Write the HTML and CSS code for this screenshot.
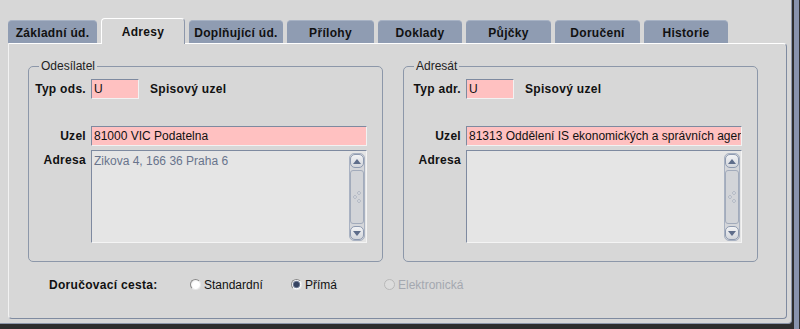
FILE: index.html
```html
<!DOCTYPE html>
<html lang="cs">
<head>
    <meta charset="UTF-8">
    <title>Adresy</title>
    <link rel="stylesheet" href="styles.css">
</head>
<body>
    <div class="screen">
        <div class="frame">
            <div class="tabs">
                <div class="tab">Základní úd.</div>
                <div class="tab active">Adresy</div>
                <div class="tab">Doplňující úd.</div>
                <div class="tab">Přílohy</div>
                <div class="tab">Doklady</div>
                <div class="tab">Půjčky</div>
                <div class="tab">Doručení</div>
                <div class="tab">Historie</div>
            </div>

            <div class="panel">
                <div class="groups">
                    <fieldset class="group">
                        <legend>Odesílatel</legend>
                        <div class="form">
                            <label class="lbl">Typ ods.</label>
                            <div class="typ">
                                <div class="field short">U</div>
                                <span class="kind">Spisový uzel</span>
                            </div>
                            <label class="lbl gap-row">Uzel</label>
                            <div class="field gap-row">81000 VIC Podatelna</div>
                            <label class="lbl top">Adresa</label>
                            <div class="area">
                                <div class="area-text">Zikova 4, 166 36 Praha 6</div>
                                <div class="scroll">
                                    <div class="sb-btn"><span class="arrow up"></span></div>
                                    <div class="sb-track">
                                        <svg width="8" height="12" viewBox="0 0 8 12"><circle cx="2" cy="6" r="1.3" fill="#fff" stroke="#8c96a8" stroke-width="0.7"/><circle cx="6" cy="2" r="1.3" fill="#fff" stroke="#8c96a8" stroke-width="0.7"/><circle cx="6" cy="10" r="1.3" fill="#fff" stroke="#8c96a8" stroke-width="0.7"/></svg>
                                    </div>
                                    <div class="sb-btn"><span class="arrow down"></span></div>
                                </div>
                            </div>
                        </div>
                    </fieldset>

                    <fieldset class="group">
                        <legend>Adresát</legend>
                        <div class="form">
                            <label class="lbl">Typ adr.</label>
                            <div class="typ">
                                <div class="field short">U</div>
                                <span class="kind">Spisový uzel</span>
                            </div>
                            <label class="lbl gap-row">Uzel</label>
                            <div class="field gap-row">81313 Oddělení IS ekonomických a správních agend</div>
                            <label class="lbl top">Adresa</label>
                            <div class="area">
                                <div class="area-text"></div>
                                <div class="scroll">
                                    <div class="sb-btn"><span class="arrow up"></span></div>
                                    <div class="sb-track">
                                        <svg width="8" height="12" viewBox="0 0 8 12"><circle cx="2" cy="6" r="1.3" fill="#fff" stroke="#8c96a8" stroke-width="0.7"/><circle cx="6" cy="2" r="1.3" fill="#fff" stroke="#8c96a8" stroke-width="0.7"/><circle cx="6" cy="10" r="1.3" fill="#fff" stroke="#8c96a8" stroke-width="0.7"/></svg>
                                    </div>
                                    <div class="sb-btn"><span class="arrow down"></span></div>
                                </div>
                            </div>
                        </div>
                    </fieldset>
                </div>

                <div class="route">
                    <span class="route-lbl">Doručovací cesta:</span>
                    <span class="opt opt-std"><span class="radio"></span>Standardní</span>
                    <span class="opt opt-prima"><span class="radio checked"></span>Přímá</span>
                    <span class="opt disabled"><span class="radio"></span>Elektronická</span>
                </div>
            </div>
        </div>
        <div class="edge"></div>
    </div>
</body>
</html>
```

FILE: styles.css
```css
/* okno s kartami */
body {
    margin: 0;
    font-family: "Liberation Sans", Arial, sans-serif;
    font-size: 12px;
    color: #111;
}

.screen {
    width: 800px;
    height: 329px;
    display: flex;
    background: #2e2e2e;
    overflow: hidden;
}

.frame {
    width: 792px;
    height: 324px;
    background: #d7d7d7;
    border-right: 1px solid #8d97aa;
    border-bottom: 1px solid #8d97aa;
    border-bottom-right-radius: 4px;
    padding-top: 19px;
    box-sizing: border-box;
}

.edge {
    width: 5px;
    margin-left: 2px;
    background: #8893ad;
}

.tabs {
    display: flex;
    align-items: flex-end;
    gap: 4px;
    padding-left: 8px;
    height: 24px;
    position: relative;
    z-index: 1;
}

.tab {
    height: 23px;
    line-height: 25px;
    text-align: center;
    font-weight: bold;
    letter-spacing: 0.3px;
    background: #8f9cb2;
    border-radius: 4px 4px 0 0;
    box-sizing: border-box;
    border-top: 1px solid #a7b2c4;
}

.tab:nth-child(1) { width: 89px; }
.tab:nth-child(2) { width: 84px; }
.tab:nth-child(3) { width: 94px; }
.tab:nth-child(4) { width: 87px; }
.tab:nth-child(5) { width: 84px; }
.tab:nth-child(6) { width: 85px; }
.tab:nth-child(7) { width: 85px; }
.tab:nth-child(8) { width: 84px; }

.tab.active {
    height: 26px;
    line-height: 27px;
    margin-bottom: -1px;
    background: #d7d7d7;
    border-top: 1px solid #fff;
    border-left: 1px solid #fff;
    border-right: 1px solid #8d97aa;
}

.panel {
    width: 779px;
    height: 276px;
    margin-left: 8px;
    box-sizing: border-box;
    border-top: 1px solid #fff;
    border-left: 1px solid #f2f2f2;
    border-right: 1px solid #7f8ba0;
    border-bottom: 1px solid #7f8ba0;
    border-radius: 0 4px 4px 4px;
    padding-top: 15px;
}

.groups {
    display: flex;
    gap: 20px;
    padding-left: 19px;
}

.group {
    width: 355px;
    margin: 0;
    padding: 0 0 18px 0;
    border: 1px solid #8c97a9;
    border-radius: 5px;
    box-sizing: border-box;
    min-width: 0;
}

.group legend {
    margin-left: 10px;
    padding: 0 2px;
    line-height: 14px;
    font-size: 12px;
    color: #222;
}

.form {
    display: grid;
    grid-template-columns: 57px 276px;
    column-gap: 5px;
    margin-top: 6px;
}

.lbl {
    font-weight: bold;
    letter-spacing: 0.3px;
    text-align: right;
    line-height: 20px;
}

.lbl.top {
    margin-top: 4px;
    line-height: 20px;
}

.gap-row {
    margin-top: 27px;
}

.typ {
    display: flex;
    align-items: center;
    gap: 11px;
}

.kind {
    font-weight: bold;
    letter-spacing: 0.3px;
}

.field {
    height: 20px;
    line-height: 19px;
    padding-left: 2px;
    box-sizing: border-box;
    background: #ffc1c1;
    border-top: 1px solid #7e8aa0;
    border-left: 1px solid #7e8aa0;
    border-right: 1px solid #f2f2f2;
    border-bottom: 1px solid #f2f2f2;
    white-space: nowrap;
    overflow: hidden;
}

.field.short {
    width: 48px;
}

.area {
    margin-top: 4px;
    height: 93px;
    display: flex;
    box-sizing: border-box;
    background: #e5e5e5;
    border-top: 1px solid #7e8aa0;
    border-left: 1px solid #7e8aa0;
    border-right: 1px solid #f4f4f4;
    border-bottom: 1px solid #f4f4f4;
}

.area-text {
    flex: 1;
    padding: 3px 2px;
    color: #68748c;
}

.scroll {
    width: 16px;
    margin: 2px 1px 1px 0;
    display: flex;
    flex-direction: column;
    box-sizing: border-box;
    border: 1px solid #a9b2c2;
    border-radius: 5px;
    background: #d4d6da;
}

.sb-btn {
    height: 14px;
    box-sizing: border-box;
    border: 1px solid #8e9ab0;
    border-radius: 5px;
    background: linear-gradient(#f2f3f5, #d3d6dc);
    display: flex;
    align-items: center;
    justify-content: center;
}

.arrow {
    width: 0;
    height: 0;
    border-left: 4px solid transparent;
    border-right: 4px solid transparent;
}

.arrow.up {
    border-bottom: 5px solid #5e6d8a;
}

.arrow.down {
    border-top: 5px solid #5e6d8a;
}

.sb-track {
    flex: 1;
    margin: 2px 0;
    box-sizing: border-box;
    border: 1px solid #a2abbb;
    border-radius: 3px;
    background: #d2d4d8;
    display: flex;
    align-items: center;
    justify-content: center;
}

.route {
    display: flex;
    align-items: center;
    margin-top: 15px;
    padding-left: 40px;
    height: 16px;
}

.route-lbl {
    width: 141px;
    font-weight: bold;
    letter-spacing: 0.3px;
}

.opt {
    display: flex;
    align-items: center;
    gap: 3px;
    color: #111;
}

.opt-std { width: 101px; }
.opt-prima { width: 93px; }

.opt.disabled {
    color: #a4a8b0;
}

.radio {
    width: 11px;
    height: 11px;
    box-sizing: border-box;
    border-radius: 50%;
    border: 1px solid #8a8a8a;
    border-right-color: #e8e8e8;
    border-bottom-color: #e8e8e8;
    background: radial-gradient(circle at 60% 60%, #fff 45%, #e0e0e0 100%);
    position: relative;
    top: -1px;
}

.radio.checked {
    background: radial-gradient(circle, #364461 35%, #8a95ab 55%, #fff 65%);
}

.opt.disabled .radio {
    border-color: #b8b8b8;
    background: #dcdcdc;
}
```
